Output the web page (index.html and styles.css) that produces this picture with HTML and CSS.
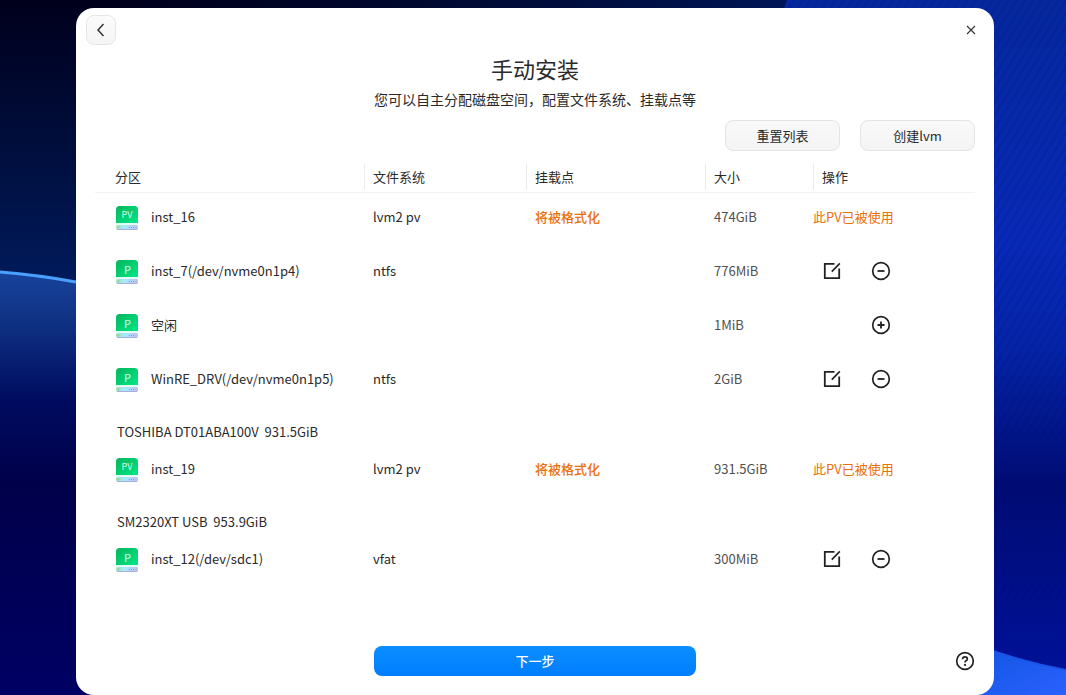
FILE: index.html
```html
<!DOCTYPE html>
<html lang="zh-CN">
<head>
    <meta charset="UTF-8">
    <meta name="viewport" content="width=device-width, initial-scale=1.0">
    <title>手动安装</title>
    <link rel="stylesheet" href="styles.css">
</head>
<body>
    <!-- desktop wallpaper -->
    <svg class="wallpaper" viewBox="0 0 1066 695" preserveAspectRatio="none" aria-hidden="true">
        <defs>
            <linearGradient id="sky" x1="0" y1="0" x2="0" y2="1">
                <stop offset="0" stop-color="#00001c"/>
                <stop offset="0.4" stop-color="#001a5a"/>
                <stop offset="1" stop-color="#001a5a"/>
            </linearGradient>
            <linearGradient id="top" x1="0" y1="0" x2="1" y2="0">
                <stop offset="0.15" stop-color="#00103c" stop-opacity="0"/>
                <stop offset="1" stop-color="#001658"/>
            </linearGradient>
            <linearGradient id="wave" x1="0" y1="0" x2="0" y2="1">
                <stop offset="0" stop-color="#17439c"/>
                <stop offset="0.13" stop-color="#0e2f80"/>
                <stop offset="0.3" stop-color="#000c60"/>
                <stop offset="0.5" stop-color="#00004a"/>
                <stop offset="1" stop-color="#000064"/>
            </linearGradient>
            <linearGradient id="fold" x1="0" y1="0" x2="0" y2="1">
                <stop offset="0" stop-color="#05289e"/>
                <stop offset="0.35" stop-color="#082ab8"/>
                <stop offset="0.5" stop-color="#0424a8"/>
                <stop offset="0.7" stop-color="#000c74"/>
                <stop offset="1" stop-color="#0012a0"/>
            </linearGradient>
            <linearGradient id="glow" x1="0" y1="0" x2="1" y2="1">
                <stop offset="0.3" stop-color="#0c54d8"/>
                <stop offset="1" stop-color="#2a60ff"/>
            </linearGradient>
            <pattern id="ribs" width="7" height="12" patternUnits="userSpaceOnUse" patternTransform="rotate(32)">
                <rect width="3" height="12" fill="#000a60" opacity="0.12"/>
            </pattern>
        </defs>
        <rect width="1066" height="695" fill="url(#sky)"/>
        <rect width="800" height="100" fill="url(#top)"/>
        <path d="M0 272Q38 275 76 282L540 400V695H0Z" fill="url(#wave)"/>
        <path d="M0 272Q38 275 76 282" fill="none" stroke="#4aa0ff" stroke-width="3"/>
        <path d="M787 0H1066V695H540Z" fill="url(#fold)"/>
        <path d="M787 0H1066V695H540Z" fill="url(#ribs)"/>
        <path d="M900 614Q990 656 1066 670V695H900Z" fill="url(#glow)"/>
        <path d="M900 614Q990 656 1066 670" fill="none" stroke="#1c54e8" stroke-width="2"/>
    </svg>

    <!-- shared icons -->
    <svg class="sprite" aria-hidden="true">
        <defs>
            <linearGradient id="green" x1="0" y1="0" x2="1" y2="1">
                <stop offset="0" stop-color="#06b45c"/>
                <stop offset="1" stop-color="#00e886"/>
            </linearGradient>
            <linearGradient id="tray" x1="0" y1="0" x2="1" y2="0">
                <stop offset="0" stop-color="#a8dcc8"/>
                <stop offset="0.4" stop-color="#a4ecff"/>
                <stop offset="1" stop-color="#c0bcf0"/>
            </linearGradient>
        </defs>
        <symbol id="disk" viewBox="0 0 22 24">
            <path d="M0 17V3.5Q0 0 3.5 0H18.5Q22 0 22 3.5V17Z" fill="url(#green)"/>
            <path d="M0 17H22V20H0Z" fill="#e4fbf4"/>
            <rect x="0" y="19" width="22" height="5" rx="2" fill="url(#tray)"/>
            <path d="M1 23.5H21" stroke="#a9aee0" stroke-width="1"/>
            <circle cx="2.5" cy="21.3" r="1" fill="#8ed67c"/>
            <path d="M13 21.5H19" stroke="#58b4f4" stroke-width="1" stroke-dasharray="1 1"/>
        </symbol>
        <symbol id="edit" viewBox="0 0 18 18">
            <path d="M11.5 1.8H1.8V16.2H16.2V6.5" fill="none" stroke="#222" stroke-width="1.8"/>
            <path d="M8.8 9.6L16.8 1.4" fill="none" stroke="#222" stroke-width="1.7"/>
        </symbol>
        <symbol id="minus" viewBox="0 0 20 20">
            <circle cx="10" cy="10" r="8.3" fill="none" stroke="#222" stroke-width="1.7"/>
            <path d="M6.5 10H13.5" stroke="#222" stroke-width="1.8"/>
        </symbol>
        <symbol id="plus" viewBox="0 0 20 20">
            <circle cx="10" cy="10" r="8.3" fill="none" stroke="#222" stroke-width="1.7"/>
            <path d="M6.5 10H13.5M10 6.5V13.5" stroke="#222" stroke-width="1.8"/>
        </symbol>
    </svg>

    <main class="window">
        <div class="titlebar">
            <button class="back" type="button" aria-label="返回">
                <svg width="16" height="16" viewBox="0 0 16 16"><path d="M10.5 2L5 8L10.5 14" fill="none" stroke="#333" stroke-width="1.5"/></svg>
            </button>
            <button class="plain" type="button" aria-label="关闭">
                <svg width="10" height="10" viewBox="0 0 10 10"><path d="M1 1L9 9M9 1L1 9" stroke="#333" stroke-width="1.1"/></svg>
            </button>
        </div>

        <h1>手动安装</h1>
        <p class="subtitle">您可以自主分配磁盘空间，配置文件系统、挂载点等</p>

        <div class="toolbar">
            <button class="btn" type="button">重置列表</button>
            <button class="btn" type="button">创建lvm</button>
        </div>

        <table class="partitions">
            <colgroup>
                <col class="col-name">
                <col class="col-fs">
                <col class="col-mount">
                <col class="col-size">
                <col>
            </colgroup>
            <thead>
                <tr>
                    <th><span>分区</span></th>
                    <th><span>文件系统</span></th>
                    <th><span>挂载点</span></th>
                    <th><span>大小</span></th>
                    <th><span>操作</span></th>
                </tr>
            </thead>
            <tbody>
                <tr>
                    <td><div class="name"><span class="disk"><svg><use href="#disk"/></svg><b>PV</b></span>inst_16</div></td>
                    <td>lvm2 pv</td>
                    <td class="warn">将被格式化</td>
                    <td class="size">474GiB</td>
                    <td class="used">此PV已被使用</td>
                </tr>
                <tr>
                    <td><div class="name"><span class="disk single"><svg><use href="#disk"/></svg><b>P</b></span>inst_7(/dev/nvme0n1p4)</div></td>
                    <td>ntfs</td>
                    <td></td>
                    <td class="size">776MiB</td>
                    <td>
                        <div class="actions">
                            <button class="plain" type="button" aria-label="编辑"><svg width="18" height="18"><use href="#edit"/></svg></button>
                            <button class="plain last" type="button" aria-label="删除"><svg width="20" height="20"><use href="#minus"/></svg></button>
                        </div>
                    </td>
                </tr>
                <tr>
                    <td><div class="name"><span class="disk single"><svg><use href="#disk"/></svg><b>P</b></span>空闲</div></td>
                    <td></td>
                    <td></td>
                    <td class="size">1MiB</td>
                    <td>
                        <div class="actions">
                            <button class="plain last" type="button" aria-label="新建"><svg width="20" height="20"><use href="#plus"/></svg></button>
                        </div>
                    </td>
                </tr>
                <tr>
                    <td><div class="name"><span class="disk single"><svg><use href="#disk"/></svg><b>P</b></span>WinRE_DRV(/dev/nvme0n1p5)</div></td>
                    <td>ntfs</td>
                    <td></td>
                    <td class="size">2GiB</td>
                    <td>
                        <div class="actions">
                            <button class="plain" type="button" aria-label="编辑"><svg width="18" height="18"><use href="#edit"/></svg></button>
                            <button class="plain last" type="button" aria-label="删除"><svg width="20" height="20"><use href="#minus"/></svg></button>
                        </div>
                    </td>
                </tr>
                <tr class="device">
                    <th colspan="5">TOSHIBA DT01ABA100V&nbsp; 931.5GiB</th>
                </tr>
                <tr>
                    <td><div class="name"><span class="disk"><svg><use href="#disk"/></svg><b>PV</b></span>inst_19</div></td>
                    <td>lvm2 pv</td>
                    <td class="warn">将被格式化</td>
                    <td class="size">931.5GiB</td>
                    <td class="used">此PV已被使用</td>
                </tr>
                <tr class="device">
                    <th colspan="5">SM2320XT USB&nbsp; 953.9GiB</th>
                </tr>
                <tr>
                    <td><div class="name"><span class="disk single"><svg><use href="#disk"/></svg><b>P</b></span>inst_12(/dev/sdc1)</div></td>
                    <td>vfat</td>
                    <td></td>
                    <td class="size">300MiB</td>
                    <td>
                        <div class="actions">
                            <button class="plain" type="button" aria-label="编辑"><svg width="18" height="18"><use href="#edit"/></svg></button>
                            <button class="plain last" type="button" aria-label="删除"><svg width="20" height="20"><use href="#minus"/></svg></button>
                        </div>
                    </td>
                </tr>
            </tbody>
        </table>

        <footer class="footer">
            <button class="next" type="button">下一步</button>
            <button class="plain help" type="button" aria-label="帮助">
                <svg width="20" height="20" viewBox="0 0 20 20">
                    <circle cx="10" cy="10" r="8.3" fill="none" stroke="#222" stroke-width="1.7"/>
                    <path d="M7.6 8.2Q7.7 5.9 10 5.9Q12.3 5.9 12.3 7.9Q12.3 9.1 11 9.8Q10 10.4 10 11.6" fill="none" stroke="#222" stroke-width="1.7"/>
                    <circle cx="10" cy="13.9" r="1.1" fill="#222"/>
                </svg>
            </button>
        </footer>
    </main>
</body>
</html>
```

FILE: styles.css
```css
* {
    box-sizing: border-box;
}
body {
    margin: 0;
    min-height: 100vh;
    padding: 8px 72px 0 76px;
    display: flex;
    flex-direction: column;
    background: #00004a;
    color: #2a2a2a;
    font-family: "Noto Sans CJK SC", sans-serif;
    font-size: 13px;
    line-height: 20px;
}
.wallpaper {
    position: fixed;
    top: 0;
    left: 0;
    width: 100%;
    height: 100%;
    z-index: -1;
}
.sprite {
    position: absolute;
    width: 0;
    height: 0;
}
.window {
    flex: 1;
    display: flex;
    flex-direction: column;
    padding: 7px 19px 19px;
    background: #fff;
    border-radius: 18px;
}
button {
    padding: 0;
    font: inherit;
    color: inherit;
    cursor: pointer;
}
.titlebar {
    display: flex;
    justify-content: space-between;
    align-items: center;
    margin: 0 -6px 0 -9px;
}
.back {
    width: 30px;
    height: 30px;
    display: flex;
    align-items: center;
    justify-content: center;
    background: linear-gradient(#fbfbfb, #f5f5f5);
    border: 1px solid #e6e6e6;
    border-radius: 8px;
}
.plain {
    width: 20px;
    height: 20px;
    display: flex;
    align-items: center;
    justify-content: center;
    background: none;
    border: none;
}
h1 {
    margin: 7px 0 0;
    font-size: 22px;
    font-weight: normal;
    line-height: 32px;
    text-align: center;
}
.subtitle {
    margin: 5px 0 11px;
    font-size: 14px;
    text-align: center;
}
.toolbar {
    display: flex;
    justify-content: flex-end;
    gap: 20px;
}
.btn {
    width: 115px;
    height: 31px;
    background: linear-gradient(#f9f9f9, #f4f4f4);
    border: 1px solid #e4e4e4;
    border-radius: 8px;
}
.partitions {
    width: 100%;
    margin-top: 10px;
    table-layout: fixed;
    border-collapse: separate;
    border-spacing: 0;
}
.col-name {
    width: 269px;
}
.col-fs {
    width: 162px;
}
.col-mount {
    width: 179px;
}
.col-size {
    width: 108px;
}
th {
    padding: 0;
    font-weight: normal;
    text-align: left;
}
thead th {
    height: 32px;
    border-bottom: 1px solid #f2f2f2;
}
thead span {
    display: block;
    padding: 3px 8px;
    border-left: 1px solid #ebebeb;
}
thead th:first-child span {
    padding-left: 20px;
    border-left: none;
}
td {
    height: 54px;
    padding: 0 0 7px 9px;
}
td:first-child {
    padding-left: 21px;
}
.name {
    display: flex;
    align-items: center;
    gap: 13px;
}
.disk {
    display: grid;
    width: 22px;
    height: 22px;
}
.disk svg {
    grid-area: 1 / 1;
    width: 22px;
    height: 24px;
}
.disk b {
    grid-area: 1 / 1;
    z-index: 1;
    color: #d9fbea;
    font-size: 9px;
    font-weight: normal;
    line-height: 18px;
    text-align: center;
}
.disk.single b {
    font-size: 11px;
    padding-left: 1px;
}
.size {
    color: #505050;
}
.warn {
    color: #e8700a;
    font-weight: 500;
}
.used {
    padding-left: 0;
    color: #e8700a;
}
.actions {
    display: grid;
    grid-template-columns: 20px 20px;
    gap: 29px;
}
.last {
    grid-column: 2;
}
.device th {
    height: 36px;
    padding: 10px 0 0 22px;
}
.footer {
    display: grid;
    grid-template-columns: 1fr 322px 1fr;
    align-items: center;
    margin-top: auto;
}
.next {
    grid-column: 2;
    height: 30px;
    background: linear-gradient(#0b8eff, #007dff);
    border: none;
    border-radius: 8px;
    color: #fff;
    font-weight: 500;
}
.help {
    justify-self: end;
}
```
